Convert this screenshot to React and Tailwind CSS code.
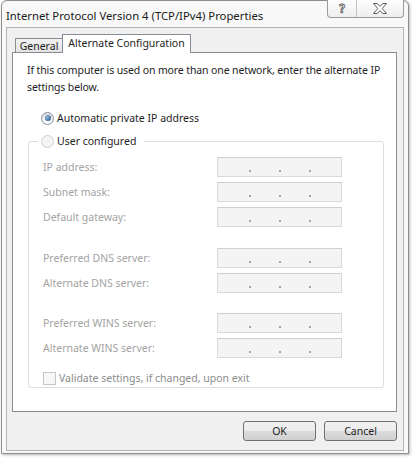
import React from 'react';

// Win7 style radio button
const Radio = ({ checked, disabled }) => (
  <span
    className={`flex h-[13px] w-[13px] shrink-0 items-center justify-center rounded-full border ${
      disabled
        ? 'border-[#cfcfcf] bg-[#f4f4f4]'
        : 'border-[#8a9198] bg-[linear-gradient(to_bottom,#dcdcdc,#ffffff)]'
    }`}
  >
    {checked && (
      <span className="h-[6px] w-[6px] rounded-full bg-[radial-gradient(circle_at_35%_35%,#8dbbe4,#1d4a73)]" />
    )}
  </span>
);

const IpField = () => (
  <div className="flex h-[20px] w-[125px] border border-[#d9d9d9] border-t-[#cfcfcf] bg-[#f4f4f4] pl-[3px]">
    {[0, 1, 2].map((i) => (
      <div key={i} className="flex w-[30px] items-end justify-end pb-[4px]">
        <span className="h-[2px] w-[2px] bg-[#a5a5a5]" />
      </div>
    ))}
  </div>
);

const FieldRow = ({ label }) => (
  <div className="flex h-[20px] items-center">
    <span className="w-[174px] text-[#a3a3a3]">{label}</span>
    <IpField />
  </div>
);

const Button = ({ children }) => (
  <button className="h-[20px] w-[73px] rounded-[3px] border border-[#707070] bg-[linear-gradient(to_bottom,#f2f2f2_0%,#ebebeb_50%,#dddddd_50%,#cfcfcf_100%)] text-[#1e1e1e] leading-[18px]">
    {children}
  </button>
);

export default function App() {
  return (
    <div className="h-[460px] w-[414px] overflow-hidden bg-white pl-[1px] font-['Noto_Sans',sans-serif] text-[10.5px] leading-[17px] text-[#1e1e1e]">
      {/* window */}
      <div className="flex h-[454px] w-[408px] flex-col rounded-t-[6px] border border-[#8e8e8e] bg-[#f8f8f8] px-[4px] pb-[2px] shadow-[1px_1px_3px_rgba(0,0,0,0.3)]">
        {/* title bar */}
        <div className="flex h-[26px] items-start justify-between">
          <span className="pt-[6px] text-[11.3px] text-[#1a1a1a]">
            Internet Protocol Version 4 (TCP/IPv4) Properties
          </span>
          <div className="-mt-[1px] flex h-[18px] rounded-b-[4px] border border-t-0 border-[#9a9a9a] bg-[linear-gradient(to_bottom,#fdfdfd,#eeeeee)]">
            <div className="flex w-[29px] items-center justify-center border-r border-[#c4c4c4] text-[12px] font-bold leading-none text-white [-webkit-text-stroke:0.8px_#555]">
              ?
            </div>
            <div className="flex w-[46px] items-center justify-center">
              <svg width="14" height="11" viewBox="0 0 14 11">
                <polygon
                  points="0.5,0.5 4,0.5 7,3.3 10,0.5 13.5,0.5 9.2,5.5 13.5,10.5 10,10.5 7,7.7 4,10.5 0.5,10.5 4.8,5.5"
                  fill="#ffffff"
                  stroke="#5a5a5a"
                  strokeWidth="1"
                />
              </svg>
            </div>
          </div>
        </div>

        {/* client area */}
        <div className="flex flex-1 flex-col border border-[#b4b4b4] bg-[#f0f0f0] pt-[6px]">
          {/* tabs */}
          <div className="ml-[8px] flex items-end">
            <div className="flex h-[14px] w-[48px] items-center justify-center border border-b-0 border-[#898c95] bg-[linear-gradient(to_bottom,#f2f2f2,#e3e3e3)] pt-[1px]">
              General
            </div>
            <div className="relative z-10 -mb-[1px] -ml-[1px] flex h-[19px] w-[129px] items-center justify-center border border-b-0 border-[#898c95] bg-white pb-[1px]">
              Alternate Configuration
            </div>
          </div>

          {/* panel */}
          <div className="ml-[5px] h-[360px] w-[385px] border border-[#898c95] bg-white">
            <p className="whitespace-nowrap pl-[14px] pt-[9px] tracking-[-0.12px]">
              If this computer is used on more than one network, enter the alternate IP
              <br />
              settings below.
            </p>

            <div className="ml-[28px] mt-[13px] flex h-[18px] items-center gap-[3px]">
              <Radio checked />
              <span>Automatic private IP address</span>
            </div>

            <fieldset className="ml-[15px] mt-[5px] w-[356px] rounded-[3px] border border-[#d5dfe5]">
              <legend className="ml-[9px] flex h-[18px] items-center gap-[3px] pl-[3px] pr-[8px]">
                <Radio disabled />
                <span>User configured</span>
              </legend>

              <div className="flex flex-col pl-[14px] pt-[7px]">
                <div className="flex flex-col gap-[5px]">
                  <FieldRow label="IP address:" />
                  <FieldRow label="Subnet mask:" />
                  <FieldRow label="Default gateway:" />
                </div>
                <div className="mt-[21px] flex flex-col gap-[5px]">
                  <FieldRow label="Preferred DNS server:" />
                  <FieldRow label="Alternate DNS server:" />
                </div>
                <div className="mt-[20px] flex flex-col gap-[5px]">
                  <FieldRow label="Preferred WINS server:" />
                  <FieldRow label="Alternate WINS server:" />
                </div>
                <div className="mt-[12px] flex h-[17px] items-center gap-[3px]">
                  <span className="h-[13px] w-[13px] border border-[#c6c6c6] bg-[#f7f7f7]" />
                  <span className="text-[#8c8c8c]">Validate settings, if changed, upon exit</span>
                </div>
              </div>
            </fieldset>
          </div>

          {/* buttons */}
          <div className="mr-[6px] mt-[9px] flex justify-end gap-[8px]">
            <Button>OK</Button>
            <Button>Cancel</Button>
          </div>
        </div>
      </div>
    </div>
  );
}
